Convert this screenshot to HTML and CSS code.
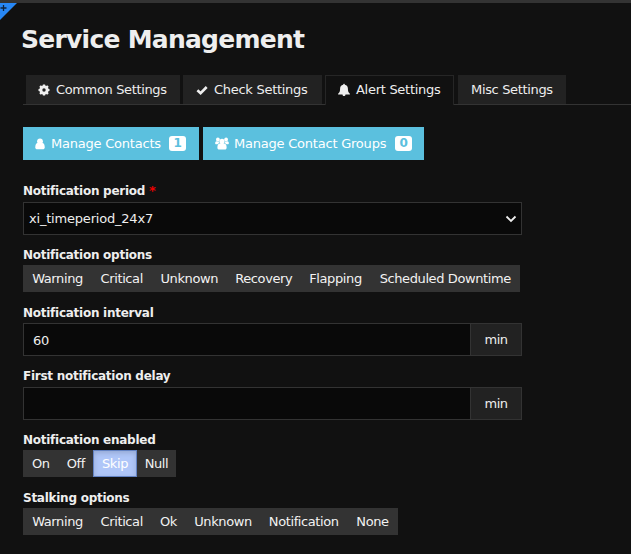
FILE: index.html
```html
<!DOCTYPE html>
<html lang="en">
<head>
<meta charset="utf-8">
<title>Service Management</title>
<link rel="stylesheet" href="styles.css">
</head>
<body>
<div class="topbar"></div>
<div class="corner"><svg width="17" height="17" viewBox="0 0 17 17"><path d="M0 0H17L0 17Z" fill="#2787f5"/><path d="M.5 5h6M3.500 2v6" stroke="#10233c" stroke-width="1.300"/></svg></div>
<main class="page">
<h1 class="title">Service Management</h1>
<nav class="tabs">
<a class="tab common"><svg class="icon" width="12" height="12" viewBox="0 0 12 12"><g fill="#eee"><circle cx="6" cy="6" r="4.500"/><path d="M4.900 .5h2.200l.4 2h-3zM4.900 11.500h2.200l.4-2h-3zM.5 4.900v2.200l2 .4v-3zM11.500 4.900v2.200l-2 .4v-3zM1.300 2.800 2.800 1.300 4.500 2.500l-2 2zM10.700 2.800 9.200 1.300 7.500 2.500l2 2zM1.300 9.200l1.500 1.500 1.700-1.200-2-2zM10.700 9.200l-1.500 1.500-1.700-1.200 2-2z"/></g><circle cx="6" cy="6" r="1.700" fill="#222"/></svg><span>Common Settings</span></a>
<a class="tab check"><svg class="icon" width="12" height="12" viewBox="0 0 12 12"><path d="M1.400 6.200 4.600 9.200 10.700 3" fill="none" stroke="#eee" stroke-width="2.600"/></svg><span>Check Settings</span></a>
<a class="tab alert"><svg class="icon" width="12" height="14" viewBox="0 0 12 14"><path d="M6 .8c.6 0 .8.4.8.9C8.800 2.100 9.900 3.600 9.900 5.400c0 2.700.5 4.100 2 5.300v.7H.1v-.7C1.600 9.500 2.100 8.100 2.100 5.400c0-1.800 1.100-3.300 3.100-3.700C5.200 1.200 5.400.8 6 .8zM4.500 11.600h3c-.1 1-.7 1.500-1.500 1.500s-1.400-.5-1.500-1.500z" fill="#eee"/></svg><span>Alert Settings</span></a>
<a class="tab misc"><span>Misc Settings</span></a>
</nav>
<div class="actions">
<button class="action contacts"><svg class="icon" width="10" height="12" viewBox="0 0 10 12"><circle cx="5" cy="3.300" r="2.900" fill="#fff"/><path d="M2.300 5C.8 5.400.3 7.200.3 9.200c0 1.500.8 2.100 1.900 2.100h5.600c1.100 0 1.900-.6 1.900-2.100 0-2-.5-3.800-2-4.200z" fill="#fff"/></svg><span class="action-text">Manage Contacts</span><span class="badge">1</span></button>
<button class="action groups"><svg class="icon" width="14" height="13" viewBox="0 0 14 13"><g fill="#fff"><circle cx="2.900" cy="2.400" r="1.900"/><circle cx="11.100" cy="2.400" r="1.900"/><path d="M1 4.300 4 4.500 3.900 6.300 2.500 7.300H1.300C.2 7.300 0 6.400.2 5.400zM13 4.300 10 4.500l.1 1.800 1.400 1h1.200c1.100 0 1.300-.9 1.100-1.900z"/><circle cx="7" cy="4.400" r="2.600"/><path d="M4.600 6.500C3 6.900 2.400 8.300 2.400 10.400c0 1.400.7 2 1.800 2h5.600c1.100 0 1.800-.6 1.800-2 0-2.100-.6-3.500-2.200-3.900z"/></g></svg><span class="action-text">Manage Contact Groups</span><span class="badge">0</span></button>
</div>
<div class="field period"><label>Notification period <b class="req">*</b></label>
<div class="select"><span>xi_timeperiod_24x7</span><svg width="12" height="8" viewBox="0 0 12 8"><path d="M1.500 1.500 6 6l4.500-4.500" fill="none" stroke="#eee" stroke-width="1.800"/></svg></div></div>
<div class="field options"><label>Notification options</label>
<div class="group"><button>Warning</button><button>Critical</button><button>Unknown</button><button>Recovery</button><button>Flapping</button><button>Scheduled Downtime</button></div></div>
<div class="field interval"><label>Notification interval</label>
<div class="input-group"><div class="input">60</div><div class="addon">min</div></div></div>
<div class="field delay"><label>First notification delay</label>
<div class="input-group"><div class="input"></div><div class="addon">min</div></div></div>
<div class="field enabled"><label>Notification enabled</label>
<div class="group"><button>On</button><button>Off</button><button class="active">Skip</button><button>Null</button></div></div>
<div class="field stalking"><label>Stalking options</label>
<div class="group"><button>Warning</button><button>Critical</button><button>Ok</button><button>Unknown</button><button>Notification</button><button>None</button></div></div>
</main>
</body>
</html>
```
FILE: styles.css
```css
* { box-sizing: border-box; }
body { margin: 0; height: 554px; overflow: hidden; background: #111; color: #eee; font: 13px/18px Verdana, "DejaVu Sans", sans-serif; letter-spacing: -0.15px; }
button { font: inherit; letter-spacing: inherit; color: inherit; border: 0; margin: 0; padding: 0; }
.topbar { height: 3px; background: #333; }
.corner { position: absolute; left: 0; top: 3px; line-height: 0; }
.page { padding-left: 23px; }
.title { margin: 0 0 0 -2px; padding-top: 19px; height: 72px; font-size: 25px; line-height: 35px; font-weight: bold; letter-spacing: -0.75px; }
.tabs { display: flex; height: 30px; padding-left: 3px; border-bottom: 1px solid #333; }
.tab { display: flex; align-items: center; height: 29px; padding-left: 12px; background: #222; margin-right: 3px; white-space: nowrap; letter-spacing: -0.28px; }
.tab .icon { margin-right: 6px; flex: none; }
.common { width: 154px; letter-spacing: -0.36px; }
.check { width: 139px; padding-left: 13px; }
.alert { width: 129px; height: 30px; padding-bottom: 2px; border: 1px solid #262626; border-bottom: 0; background: #111; margin-right: 4px; }
.misc { width: 108px; padding-left: 13px; letter-spacing: -0.34px; }
.actions { display: flex; gap: 4px; padding-top: 22px; }
.action { display: flex; align-items: center; height: 33px; padding-left: 12px; background: #5bc0de; color: #fff; white-space: nowrap; letter-spacing: -0.22px; }
.contacts { width: 176px; }
.groups { width: 221px; }
.contacts .icon { margin-right: 6px; }
.groups .icon { margin-right: 5px; }
.badge { width: 17px; height: 15px; margin: 0 12px 0 auto; border-radius: 3px; background: #fff; color: #5bc0de; font-size: 12px; line-height: 15px; font-weight: bold; text-align: center; }
.contacts .badge { margin-right: 13px; }
.field label { display: block; height: 18px; font-size: 12px; font-weight: bold; letter-spacing: -0.26px; white-space: nowrap; }
.req { color: #e00; font-size: 13px; line-height: 12px; }
.period { padding-top: 22px; }
.select { display: flex; align-items: center; justify-content: space-between; width: 499px; height: 33px; margin-top: 2px; padding: 0 4px 0 5px; border: 1px solid #333; background: #090909; letter-spacing: -0.2px; }
.options { padding-top: 11px; }
.group { display: grid; width: max-content; height: 27px; margin-top: 1px; background: #333; letter-spacing: -0.4px; }
.options .group { grid-template-columns: 69px 59.500px 75.500px 73.500px 70px 149.500px; }
.enabled .group { grid-template-columns: 35.500px 34.500px 44px 39px; }
.stalking .group { grid-template-columns: 69px 59.500px 34px 75px 86.500px 51px; }
.group button { background: #333; line-height: 27px; white-space: nowrap; color: #f2f2f2; }
.group .active { background: #afc6f8; border: 1px solid #6383c4; line-height: 25px; color: #fff; box-shadow: inset 0 2px 5px rgba(0, 0, 0, .15); }
.interval { padding-top: 12px; }
.input-group { display: flex; width: 499px; height: 33px; margin-top: 1px; border: 1px solid #333; }
.input { flex: 1; padding-left: 9px; background: #090909; line-height: 33px; }
.addon { width: 51px; border-left: 1px solid #333; background: #222; text-align: center; line-height: 31px; letter-spacing: -0.5px; }
.delay { padding-top: 11px; }
.delay .input-group { margin-top: 2px; }
.enabled { padding-top: 11px; }
.stalking { padding-top: 12px; }
```
